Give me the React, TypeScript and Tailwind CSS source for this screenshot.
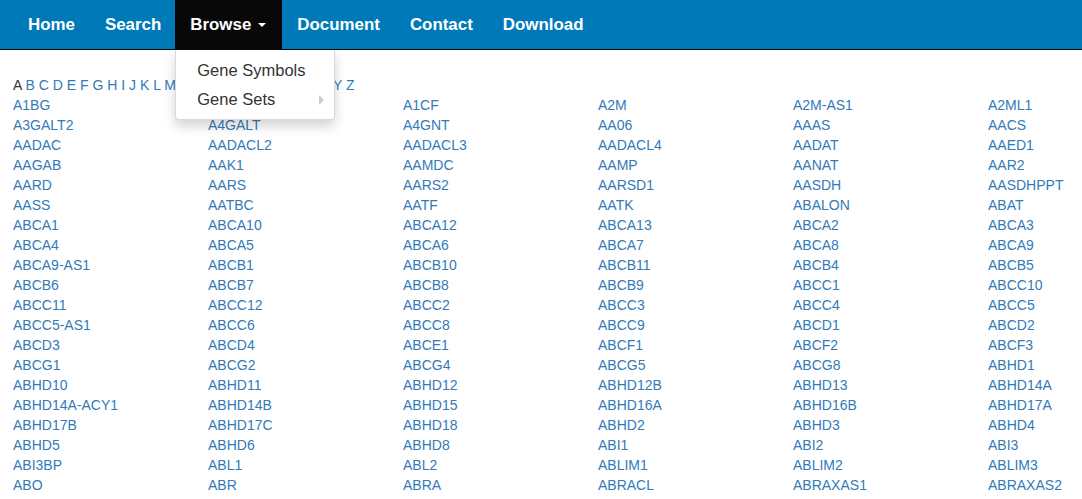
import React from "react";

const NAV = ["Home", "Search", "Browse", "Document", "Contact", "Download"];

const LETTERS = "BCDEFGHIJKLMNOPQRSTUVWXYZ".split("");

const GENES = [
  "A1BG", "A1BG-AS1", "A1CF", "A2M", "A2M-AS1", "A2ML1",
  "A3GALT2", "A4GALT", "A4GNT", "AA06", "AAAS", "AACS",
  "AADAC", "AADACL2", "AADACL3", "AADACL4", "AADAT", "AAED1",
  "AAGAB", "AAK1", "AAMDC", "AAMP", "AANAT", "AAR2",
  "AARD", "AARS", "AARS2", "AARSD1", "AASDH", "AASDHPPT",
  "AASS", "AATBC", "AATF", "AATK", "ABALON", "ABAT",
  "ABCA1", "ABCA10", "ABCA12", "ABCA13", "ABCA2", "ABCA3",
  "ABCA4", "ABCA5", "ABCA6", "ABCA7", "ABCA8", "ABCA9",
  "ABCA9-AS1", "ABCB1", "ABCB10", "ABCB11", "ABCB4", "ABCB5",
  "ABCB6", "ABCB7", "ABCB8", "ABCB9", "ABCC1", "ABCC10",
  "ABCC11", "ABCC12", "ABCC2", "ABCC3", "ABCC4", "ABCC5",
  "ABCC5-AS1", "ABCC6", "ABCC8", "ABCC9", "ABCD1", "ABCD2",
  "ABCD3", "ABCD4", "ABCE1", "ABCF1", "ABCF2", "ABCF3",
  "ABCG1", "ABCG2", "ABCG4", "ABCG5", "ABCG8", "ABHD1",
  "ABHD10", "ABHD11", "ABHD12", "ABHD12B", "ABHD13", "ABHD14A",
  "ABHD14A-ACY1", "ABHD14B", "ABHD15", "ABHD16A", "ABHD16B", "ABHD17A",
  "ABHD17B", "ABHD17C", "ABHD18", "ABHD2", "ABHD3", "ABHD4",
  "ABHD5", "ABHD6", "ABHD8", "ABI1", "ABI2", "ABI3",
  "ABI3BP", "ABL1", "ABL2", "ABLIM1", "ABLIM2", "ABLIM3",
  "ABO", "ABR", "ABRA", "ABRACL", "ABRAXAS1", "ABRAXAS2",
];

export default function App() {
  return (
    <div className="min-h-screen bg-white font-['Liberation_Sans',Arial,sans-serif] text-[14px] leading-[20px] text-[#333] overflow-hidden">
      {/* navbar */}
      <nav className="relative h-[50px] bg-[#0079b8] border-b border-[#080808] z-10">
        <ul className="flex h-[49px] pl-[13px]">
          {NAV.map((item) =>
            item === "Browse" ? (
              <li key={item} className="relative -ml-px">
                <a className="flex items-center h-[49px] pl-[15px] pr-[16px] bg-[#080808] text-white font-bold text-[16.9px] leading-[20px]">
                  {item}
                  <span className="ml-[7px] w-0 h-0 border-t-[4px] border-t-white border-x-[4px] border-x-transparent" />
                </a>
                {/* dropdown */}
                <div className="absolute left-0 top-[50px] w-[160px] bg-white border border-[rgba(0,0,0,0.15)] border-t-0 rounded-b-[4px] shadow-[0_6px_12px_rgba(0,0,0,0.175)] pt-[6px] pb-[5px]">
                  <a className="block px-[21px] py-[3px] text-[16.5px] leading-[23px] text-[#333]">Gene Symbols</a>
                  <a className="flex items-center justify-between pl-[21px] pr-[10px] py-[3px] text-[16.5px] leading-[23px] text-[#333]">
                    Gene Sets
                    <span className="w-0 h-0 border-l-[5px] border-l-[#ccc] border-y-[5px] border-y-transparent" />
                  </a>
                </div>
              </li>
            ) : (
              <li key={item}>
                <a className="flex items-center h-[49px] px-[15px] text-white font-bold text-[16.9px] leading-[20px]">{item}</a>
              </li>
            )
          )}
        </ul>
      </nav>

      <div className="px-[13px] pt-[25px]">
        {/* alphabet */}
        <div className="whitespace-nowrap">
          <span className="text-[#333]">A</span>
          {LETTERS.map((l) => (
            <React.Fragment key={l}>
              {" "}
              <a className="text-[#337ab7]">{l}</a>
            </React.Fragment>
          ))}
        </div>

        {/* gene grid */}
        <div className="grid grid-cols-[repeat(6,195px)]">
          {GENES.map((g) => (
            <a key={g} className="block whitespace-nowrap text-[#337ab7]">{g}</a>
          ))}
        </div>
      </div>
    </div>
  );
}
